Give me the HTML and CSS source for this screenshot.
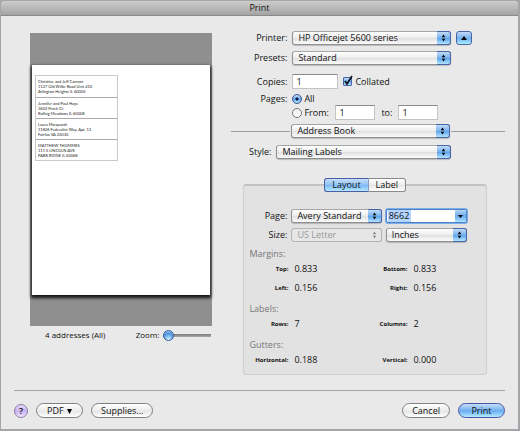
FILE: index.html
```html
<!DOCTYPE html>
<html lang="en">
<head>
    <meta charset="UTF-8">
    <meta name="viewport" content="width=device-width, initial-scale=1.0">
    <title>Print</title>
    <link rel="stylesheet" href="styles.css">
</head>
<body>
    <form class="window">
        <h1 class="titlebar">Print</h1>

        <div class="main">
            <section class="preview">
                <div class="preview-area">
                    <div class="paper">
                        <ul class="addresses">
                            <li>Christine and Jeff Cannon<br>1127 Old Wilke Road Unit 410<br>Arlington Heights IL 60005</li>
                            <li>Jennifer and Paul Hays<br>3602 Finch Ct.<br>Rolling Meadows IL 60008</li>
                            <li>Laura Marquardt<br>11826 Federalist Way, Apt. 13<br>Fairfax VA 22030</li>
                            <li>MATTHEW THOMMES<br>111 S LINCOLN AVE<br>PARK RIDGE IL 60068</li>
                        </ul>
                    </div>
                </div>
                <div class="preview-footer">
                    <span>4 addresses (All)</span>
                    <label for="zoom">Zoom:</label>
                    <input type="range" id="zoom" min="0" max="100" value="0">
                </div>
            </section>

            <section class="options">
                <div class="row">
                    <label class="name" for="printer">Printer:</label>
                    <span class="popup wide">
                        <select id="printer"><option>HP Officejet 5600 series</option></select>
                        <svg viewBox="0 0 14 14"><path d="M5 6l2-3 2 3zM5 8l2 3 2-3z"/></svg>
                    </span>
                    <button type="button" class="disclosure" aria-label="Hide details">
                        <svg viewBox="0 0 14 12"><path d="M4 8l3-4 3 4z"/></svg>
                    </button>
                </div>
                <div class="row">
                    <label class="name" for="presets">Presets:</label>
                    <span class="popup wide">
                        <select id="presets"><option>Standard</option></select>
                        <svg viewBox="0 0 14 14"><path d="M5 6l2-3 2 3zM5 8l2 3 2-3z"/></svg>
                    </span>
                </div>
                <div class="row copies">
                    <label class="name" for="copies">Copies:</label>
                    <input type="text" class="field copies-field" id="copies" value="1">
                    <span class="check">
                        <input type="checkbox" id="collated" checked>
                        <svg viewBox="0 0 12 12"><path d="M3 6l2 3 5-8"/></svg>
                    </span>
                    <label for="collated">Collated</label>
                </div>
                <div class="row pages">
                    <span class="name">Pages:</span>
                    <input type="radio" name="pages" id="all" checked>
                    <label for="all">All</label>
                </div>
                <div class="row range">
                    <span class="name"></span>
                    <input type="radio" name="pages" id="range">
                    <label class="from" for="range">From:</label>
                    <input type="text" class="field" id="from" aria-label="From page" value="1">
                    <label for="to">to:</label>
                    <input type="text" class="field" id="to" value="1">
                </div>
                <div class="row pane">
                    <span class="popup wide">
                        <select aria-label="Pane"><option>Address Book</option></select>
                        <svg viewBox="0 0 14 14"><path d="M5 6l2-3 2 3zM5 8l2 3 2-3z"/></svg>
                    </span>
                </div>
                <div class="row style">
                    <label class="name" for="style">Style:</label>
                    <span class="popup">
                        <select id="style"><option>Mailing Labels</option></select>
                        <svg viewBox="0 0 14 14"><path d="M5 6l2-3 2 3zM5 8l2 3 2-3z"/></svg>
                    </span>
                </div>

                <div class="panel">
                    <div class="tabs">
                        <button type="button" class="tab active">Layout</button>
                        <button type="button" class="tab">Label</button>
                    </div>

                    <div class="page-grid">
                        <label for="page">Page:</label>
                        <span class="popup">
                            <select id="page"><option>Avery Standard</option></select>
                            <svg viewBox="0 0 14 14"><path d="M5 6l2-3 2 3zM5 8l2 3 2-3z"/></svg>
                        </span>
                        <span class="combo">
                            <span class="selection"><input type="text" aria-label="Label number" value="8662"></span>
                            <button type="button" aria-label="Show numbers"><svg viewBox="0 0 10 12"><path d="M3 5h5l-2.500 3z"/></svg></button>
                        </span>
                        <label for="size">Size:</label>
                        <span class="popup disabled">
                            <select id="size" disabled><option>US Letter</option></select>
                            <svg viewBox="0 0 14 14"><path d="M5 6l2-3 2 3zM5 8l2 3 2-3z"/></svg>
                        </span>
                        <span class="popup">
                            <select aria-label="Units"><option>Inches</option></select>
                            <svg viewBox="0 0 14 14"><path d="M5 6l2-3 2 3zM5 8l2 3 2-3z"/></svg>
                        </span>
                    </div>

                    <h2>Margins:</h2>
                    <dl>
                        <dt>Top:</dt><dd>0.833</dd>
                        <dt>Bottom:</dt><dd>0.833</dd>
                        <dt>Left:</dt><dd>0.156</dd>
                        <dt>Right:</dt><dd>0.156</dd>
                    </dl>
                    <h2>Labels:</h2>
                    <dl>
                        <dt>Rows:</dt><dd>7</dd>
                        <dt>Columns:</dt><dd>2</dd>
                    </dl>
                    <h2>Gutters:</h2>
                    <dl>
                        <dt>Horizontal:</dt><dd>0.188</dd>
                        <dt>Vertical:</dt><dd>0.000</dd>
                    </dl>
                </div>
            </section>
        </div>

        <div class="footer">
            <button type="button" class="help">?</button>
            <button type="button" class="btn">PDF <svg viewBox="0 0 6 6"><path d="M1 1h5l-2.500 5z"/></svg></button>
            <button type="button" class="btn supplies">Supplies...</button>
            <button type="button" class="btn cancel">Cancel</button>
            <button type="submit" class="btn primary">Print</button>
        </div>
    </form>
</body>
</html>
```

FILE: styles.css
```css
* {
    box-sizing: border-box;
}

body {
    margin: 0;
    padding: 1px 2px 2px 1px;
    background-color: #a3a5a9;
    font-family: "Open Sans", sans-serif;
    font-size: 9px;
    line-height: 12px;
    color: #111;
}

button,
input,
select {
    margin: 0;
    padding: 0;
    font: inherit;
    color: inherit;
}

.window {
    background-color: #e9e9e9;
    border-radius: 4px 4px 0 0;
    overflow: hidden;
}

.titlebar {
    margin: 0;
    height: 15px;
    border-bottom: 1px solid #8a8a8a;
    background: linear-gradient(#cdcdcd, #a4a4a4);
    font-size: 9px;
    font-weight: 400;
    line-height: 14px;
    text-align: center;
}

.main {
    display: grid;
    grid-template-columns: 2fr 3fr;
    column-gap: 19px;
    padding: 15px 13px 0 29px;
}

/* Preview */

.preview {
    padding-top: 2px;
}

.preview-area {
    padding: 32px 2px 31px;
    background-color: #8f8f8f;
}

.paper {
    min-height: 230px;
    padding: 10px 3px;
    background-color: #fff;
    box-shadow: 0 2px 3px 1px #111;
}

.addresses {
    width: 48%;
    margin: 0;
    padding: 0;
    list-style: none;
    border: 1px solid #c8c8c8;
    font-family: Lato, sans-serif;
    font-size: 4px;
    line-height: 5px;
    white-space: nowrap;
    color: #222;
}

.addresses li {
    height: 21px;
    padding: 3px 2px 2px;
}

.addresses li + li {
    border-top: 1px solid #aaa;
}

.preview-footer {
    display: flex;
    align-items: center;
    gap: 4px;
    padding: 3px 1px 0 15px;
    font-size: 8px;
}

.preview-footer label {
    margin-left: auto;
}

#zoom {
    width: 48px;
    height: 12px;
    appearance: none;
    background: linear-gradient(#777, #aaa) center / 100% 3px no-repeat;
}

#zoom::-webkit-slider-thumb {
    appearance: none;
    width: 11px;
    height: 11px;
    border: 1px solid #3b5c99;
    border-radius: 50%;
    background: radial-gradient(circle at 50% 90%, #cdf2ff, #4f94e0 60%, #b8d6f5);
}

/* Print options */

.row {
    display: flex;
    align-items: center;
    gap: 5px;
    margin-bottom: 6px;
}

.name {
    width: 56px;
    text-align: right;
}

.popup {
    position: relative;
    display: flex;
}

.popup.wide {
    width: 58%;
}

.popup select {
    width: 100%;
    height: 14px;
    padding: 0 14px 0 5px;
    appearance: none;
    border: 1px solid #8f8f8f;
    border-top-color: #a5a5a5;
    border-radius: 3px;
    background: linear-gradient(#fff, #ececec 50%, #e0e0e0 51%, #fafafa);
    box-shadow: 0 1px 1px rgba(0, 0, 0, 0.2);
    line-height: 12px;
}

.popup svg {
    position: absolute;
    top: 0;
    right: 0;
    width: 14px;
    height: 14px;
    border: 1px solid #4865a8;
    border-left: 0;
    border-radius: 0 3px 3px 0;
    background: linear-gradient(#c2dcf8, #76b0ee 50%, #5ba2ea 51%, #b5e4ff);
    pointer-events: none;
}

.popup.disabled select {
    border-color: #b4b4b4;
    background: #e6e6e6;
    box-shadow: none;
    color: #999;
    opacity: 1;
}

.popup.disabled svg {
    border-color: #b4b4b4;
    background: #e6e6e6;
    fill: #888;
}

.disclosure {
    width: 16px;
    height: 14px;
    border: 1px solid #4763a5;
    border-radius: 3px;
    background: linear-gradient(#c2dcf8, #76b0ee 50%, #68acf0 51%, #b5f0ff);
}

.disclosure svg {
    display: block;
    width: 14px;
    height: 12px;
}

.field {
    width: 40px;
    height: 15px;
    padding: 0 3px;
    border: 1px solid #c4c4c4;
    border-top-color: #8a8a8a;
    background-color: #fff;
}

.copies {
    margin: 9px 0 4px;
}

.copies-field {
    width: 46px;
}

.check {
    position: relative;
    display: flex;
    margin-right: -2px;
}

.check input {
    width: 9px;
    height: 9px;
    appearance: none;
    border: 1px solid #4763a5;
    border-radius: 1px;
    background: linear-gradient(#b9d8f8, #6eaef0 50%, #a8e2ff);
}

.check svg {
    position: absolute;
    top: -2px;
    left: -1px;
    width: 12px;
    height: 12px;
    fill: none;
    stroke: #111;
    stroke-width: 1.6;
    pointer-events: none;
}

input[type="radio"] {
    width: 10px;
    height: 10px;
    margin-right: -3px;
    appearance: none;
    border: 1px solid #777;
    border-radius: 50%;
    background: linear-gradient(#eee, #fff);
}

input[type="radio"]:checked {
    border-color: #3b4f8c;
    background: radial-gradient(circle, #0a1540 1px, transparent 2px), linear-gradient(#cfe3f8, #5fa4ea 50%, #b5ecff);
}

.pages,
.range {
    margin-bottom: 0;
}

.from {
    width: 26px;
}

.range .field + label {
    margin: 0 1px;
}

.pane {
    gap: 1px;
    margin: 4px 0 7px;
}

.pane::before,
.pane::after {
    content: "";
    flex: 1;
    height: 1px;
    background-color: #a0a0a0;
}

.pane::before {
    flex: 0 0 59px;
}

.style .name {
    width: 40px;
}

.style .popup {
    width: 64%;
}

/* Label layout panel */

.panel {
    margin: 25px 18px 0 12px;
    padding: 0 19px 8px 5px;
    border: 1px solid #cfcfcf;
    border-top: 2px solid #c4c4c4;
    border-radius: 3px;
    background-color: #e2e2e2;
}

.tabs {
    display: flex;
    justify-content: center;
    margin: -8px -19px 17px -5px;
}

.tab {
    height: 14px;
    padding: 0 7px;
    border: 1px solid #888;
    border-left: 0;
    border-radius: 0 3px 3px 0;
    background: linear-gradient(#fff, #ececec 50%, #e6e6e6 51%, #fff);
    line-height: 12px;
}

.tab.active {
    border: 1px solid #4a5da8;
    border-right-color: #8899bb;
    border-radius: 3px 0 0 3px;
    background: linear-gradient(#c8e0fa, #8cc0f6 50%, #7cb8f6 51%, #b5e8ff);
}

.page-grid {
    display: grid;
    grid-template-columns: 38px 10fr 9fr;
    gap: 5px 4px;
    align-items: center;
    margin-bottom: 6px;
}

.page-grid label {
    text-align: right;
}

.combo {
    display: flex;
    height: 14px;
    border: 1px solid #4a80cc;
    border-radius: 2px;
    background-color: #fff;
    box-shadow: 0 0 0 1px #7eaee6;
}

.selection {
    flex: 1;
    min-width: 0;
    background: linear-gradient(#b4d5fe, #b4d5fe) 1px 0 / 23px 100% no-repeat;
}

.combo input {
    width: 100%;
    height: 12px;
    padding: 0 2px;
    border: 0;
    background: none;
}

.combo button {
    width: 11px;
    border: 0;
    background: linear-gradient(#b8d6f8, #6aaaf0 50%, #b0e4ff);
}

.combo svg {
    display: block;
    width: 10px;
    height: 12px;
}

h2 {
    margin: 0 0 3px;
    font-size: 9px;
    font-weight: 400;
    line-height: 12px;
    color: #777;
}

dl {
    display: grid;
    grid-template-columns: 39px 1fr 1fr 1fr;
    gap: 7px 6px;
    margin: 0 0 9px;
}

dl:last-child {
    margin-bottom: 0;
}

dt {
    font-size: 6px;
    font-weight: 700;
    text-align: right;
}

dd {
    margin: 0;
}

/* Bottom buttons */

.footer {
    display: flex;
    align-items: center;
    gap: 8px;
    margin: 15px 13px 0;
    padding: 12px 0 11px;
    border-top: 1px solid #a4a8a4;
}

.btn {
    min-width: 47px;
    height: 15px;
    padding: 0 9px;
    border: 1px solid #808080;
    border-radius: 8px;
    background: linear-gradient(#fff, #ececec 50%, #e4e4e4 51%, #fff);
    line-height: 12px;
}

.btn svg {
    width: 6px;
    height: 6px;
}

.supplies {
    margin-right: auto;
}

.primary {
    border-color: #4a55a5;
    background: linear-gradient(#c4def8, #72b0f0 50%, #64a8f0 51%, #b4ecff);
}

.help {
    width: 14px;
    height: 14px;
    border: 1px solid #8a7aa8;
    border-radius: 50%;
    background: linear-gradient(#e8dcfa, #c8b0f0 50%, #f0e4ff);
    font-weight: 600;
    line-height: 11px;
}
```
